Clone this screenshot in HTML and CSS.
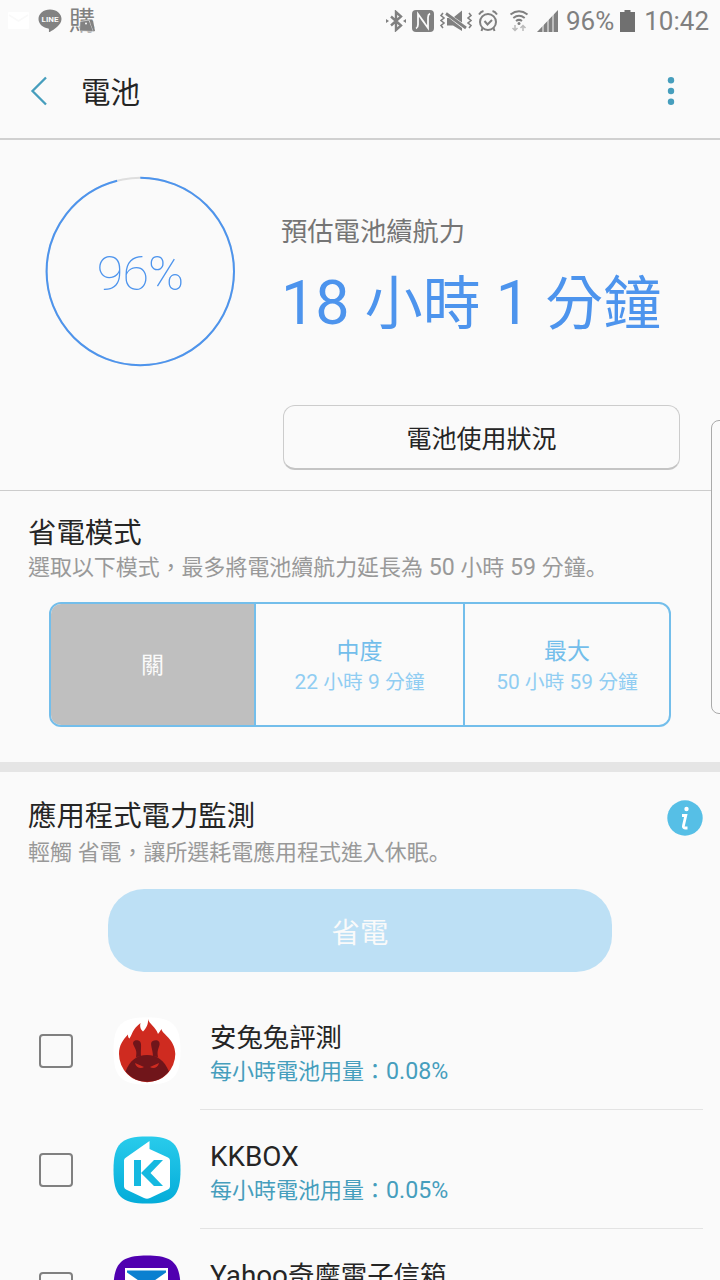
FILE: index.html
```html
<!DOCTYPE html>
<html lang="zh-Hant">
<head>
    <meta charset="UTF-8">
    <meta name="viewport" content="width=device-width, initial-scale=1.0">
    <title>電池</title>
    <link rel="stylesheet" href="styles.css">
</head>
<body>
    <div class="screen">
        <!-- Status bar -->
        <div class="status-bar">
            <svg class="icon-mail" width="22" height="18" viewBox="0 0 22 18"><rect width="21" height="17" rx="1" fill="#fff"/><path d="M1 3l9.500 6 9.500-6" fill="none" stroke="#f9f9f9" stroke-width="1.500"/></svg>
            <svg class="icon-line" width="24" height="24" viewBox="0 0 24 24"><path d="M12 .5C5.500.5.500 4.700.500 10c0 4.700 4 8.600 9.700 9.400 1 .2.800 1.500.700 3.100 0 .7.600.7 1.200.3C16 20.500 23.500 16 23.500 10 23.500 4.700 18.500.500 12 .500z" fill="#828282"/><text x="12" y="13" text-anchor="middle" class="line-label">LINE</text></svg>
            <div class="shop-badge">
                <span>購</span>
                <svg class="bag" width="16" height="13" viewBox="0 0 16 13"><path d="M1 2.500L10 1l4.500 11.500L.500 12z" fill="#828282" stroke="#fafafa" stroke-width=".6"/><path d="M10.500 1.500h3.500l2 10.500-1.500.5z" fill="#828282"/><circle cx="7" cy="4.500" r="1" fill="#fafafa"/></svg>
            </div>
            <div class="status-right">
                <svg class="icon-bt" width="20" height="22" viewBox="0 0 20 22"><path d="M5 6.500l10 9-5 4.500V2l5 4.500-10 9" fill="none" stroke="#808080" stroke-width="2.400"/><path d="M0 9l3 2-3 2zM20 9l-3 2 3 2z" fill="#808080"/></svg>
                <svg class="icon-nfc" width="22" height="22" viewBox="0 0 22 22"><rect width="22" height="22" rx="4" fill="#808080"/><path d="M4 18.500q2-1 2-4V4l6.500 9M18 3.500q-2 1-2 4V18L9.500 9" fill="none" stroke="#fafafa" stroke-width="1.800"/></svg>
                <svg class="icon-mute" width="32" height="22" viewBox="0 0 32 22"><path d="M3 3L1 5.500 4 8 1 10.500 4 13l-3 2.500L3 18M29 3l2 2.500L28 8l3 2.500L28 13l3 2.500-2 2.500" fill="none" stroke="#808080" stroke-width="1.600"/><path d="M14 7L22 .5v12zM7 8v7.500h6L22 21v-3L9 8z" fill="#808080"/><path d="M6 3.500L26 18" stroke="#808080" stroke-width="2.800"/></svg>
                <svg class="icon-alarm" width="20" height="22" viewBox="0 0 20 22"><g fill="none" stroke="#808080" stroke-width="2"><circle cx="10" cy="12" r="8"/><path d="M1 4.500C2 3 3.500 1.500 5.500 1M19 4.500C18 3 16.500 1.500 14.500 1M6.500 11l3 3.500 4.500-4.500M4.500 18L3.500 21M15.500 18l1 3"/></g></svg>
                <svg class="icon-wifi" width="20" height="22" viewBox="0 0 20 22"><path d="M1.500 4.500q8.500-6.500 17 0M4.300 8q5.700-4.500 11.400 0M7 11q3-2.300 6 0" fill="none" stroke="#808080" stroke-width="2"/><circle cx="10" cy="13.500" r="1.500" fill="#808080"/><path d="M6 15v5M3.500 18L6 20.500 8.500 18M14 21v-5M11.500 18l2.500-2.500 2.500 2.500" fill="none" stroke="#bbb" stroke-width="1.500"/></svg>
                <svg class="icon-signal" width="21" height="22" viewBox="0 0 21 22"><path d="M0 22L21 0v22z" fill="#808080"/><path d="M6 8v14M11 4v18M16 0v22" stroke="#fafafa" stroke-width="1"/></svg>
                <span class="percent">96%</span>
                <svg class="icon-battery" width="15" height="22" viewBox="0 0 15 22"><path d="M0 2h4.500V0h6v2H15v20H0z" fill="#707070"/></svg>
                <span class="clock">10:42</span>
            </div>
        </div>

        <!-- Title bar -->
        <header class="title-bar">
            <svg class="back" width="18" height="30" viewBox="0 0 18 30"><path d="M16 1.500L2.500 15 16 28.500" fill="none" stroke="#469ebd" stroke-width="2.300"/></svg>
            <h1>電池</h1>
            <svg class="more" width="8" height="30" viewBox="0 0 8 30"><g fill="#469ebd"><circle cx="4" cy="4.300" r="3.200"/><circle cx="4" cy="15" r="3.200"/><circle cx="4" cy="25.700" r="3.200"/></g></svg>
        </header>

        <!-- Remaining battery -->
        <section class="summary">
            <div class="gauge">
                <svg width="192" height="192" viewBox="0 0 192 192"><circle cx="96.300" cy="96.500" r="93.700" fill="none" stroke="#dedede" stroke-width="2"/><circle cx="96.300" cy="96.500" r="93.700" fill="none" stroke="#4d94ed" stroke-width="2" pathLength="100" stroke-dasharray="96 4" transform="rotate(-90 96.300 96.500)"/></svg>
                <span class="gauge-value">96%</span>
            </div>
            <div class="estimate">
                <div class="estimate-label">預估電池續航力</div>
                <div class="estimate-time"><span class="num">18 </span>小時<span class="num"> 1 </span>分鐘</div>
                <button class="usage-button">電池使用狀況</button>
            </div>
        </section>

        <!-- Power saving mode -->
        <section class="power-mode">
            <h2>省電模式</h2>
            <p class="desc">選取以下模式<span class="comma" lang="ja">，</span>最多將電池續航力延長為<span class="num"> 50 </span>小時<span class="num"> 59 </span>分鐘<span lang="ja">。</span></p>
            <div class="modes">
                <div class="mode selected"><div class="mode-name">關</div></div>
                <div class="mode">
                    <div class="mode-name">中度</div>
                    <div class="mode-time"><span class="num">22 </span>小時<span class="num"> 9 </span>分鐘</div>
                </div>
                <div class="mode">
                    <div class="mode-name">最大</div>
                    <div class="mode-time"><span class="num">50 </span>小時<span class="num"> 59 </span>分鐘</div>
                </div>
            </div>
        </section>

        <!-- App power monitor -->
        <section class="monitor">
            <div class="monitor-head">
                <div>
                    <h2>應用程式電力監測</h2>
                    <p class="desc">輕觸<span class="num"> </span>省電<span class="comma" lang="ja">，</span>讓所選耗電應用程式進入休眠<span lang="ja">。</span></p>
                </div>
                <svg class="info" width="36" height="36" viewBox="0 0 36 36"><circle cx="18" cy="18" r="17.700" fill="#56bfe6"/><circle cx="19.500" cy="9" r="2.200" fill="#fff"/><path d="M15 15.500h3.800L16.500 25.500q-.6 2.500 1.500 2.500h2.500" fill="none" stroke="#fff" stroke-width="2.800"/></svg>
            </div>
            <button class="save-button">省電</button>
            <div class="app-list">
                <div class="app">
                    <span class="check"></span>
                    <svg class="app-icon" width="68" height="68" viewBox="0 0 68 68">
                        <path d="M34 .5C60 .5 67.500 8 67.500 34S60 67.500 34 67.500.500 60 .500 34 8 .500 34 .500z" fill="#fff"/>
                        <path d="M35 2c1 5 8 8 10 15 1-1 2-3 3.500-5C49 17 62 22 62.300 37A28 28 0 0 1 6 37c0-9 4-14 9-19.500-.2 2 .5 3.500 1.500 4C20 16 19 13 27.500 6c-1 4 .5 7 2.500 8.500C33.500 11 35.500 7 35 2z" fill="#cf2b20"/>
                        <path d="M12.500 54.500C17 43 24 38 34 38s17 5 22 16.500A28 28 0 0 1 12.500 54.500z" fill="#70151a"/>
                        <path d="M23 40c1-6 0-7-2.500-12-2-5 4-6 6.500-3.500 2 2 .5 8 1 15zM45 40c-1-6 0-7 1.500-12 1-5-4-6-7.500-3.500-2.500 2 1 8 1 15z" fill="#70151a"/>
                        <path d="M22 46l9 4c-3 2-8 1-9-4zM46 46l-9 4c3 2 8 1 9-4z" fill="#cf2b20"/>
                    </svg>
                    <div class="app-text">
                        <div class="app-name">安兔兔評測</div>
                        <div class="app-usage">每小時電池用量：<span class="num">0.08%</span></div>
                    </div>
                </div>
                <div class="app">
                    <span class="check"></span>
                    <svg class="app-icon" width="68" height="68" viewBox="0 0 68 68">
                        <defs><linearGradient id="kk" x1="0" y1="0" x2="0" y2="1"><stop offset="0" stop-color="#29cbeb"/><stop offset="1" stop-color="#04acd9"/></linearGradient></defs>
                        <path d="M34 .5C60 .5 67.500 8 67.500 34S60 67.500 34 67.500.500 60 .500 34 8 .500 34 .500z" fill="url(#kk)"/>
                        <path d="M36.500 5v8L55 21.500q2 1 2 3v26q0 2-2 3L37 62q-3 1.500-6 0L13 53.500q-2-1-2-3v-26q0-2 2-3z" fill="#fff"/>
                        <path d="M21 24h7v26h-7zM41 24h9L37.500 37 50 50h-9L28 37z" fill="#16b9e0"/>
                    </svg>
                    <div class="app-text">
                        <div class="app-name"><span class="num">KKBOX</span></div>
                        <div class="app-usage">每小時電池用量：<span class="num">0.05%</span></div>
                    </div>
                </div>
                <div class="app">
                    <span class="check"></span>
                    <svg class="app-icon" width="68" height="68" viewBox="0 0 68 68">
                        <path d="M34 .5C60 .5 67.500 8 67.500 34S60 67.500 34 67.500.500 60 .500 34 8 .500 34 .500z" fill="#5000b0"/>
                        <path d="M12 13h43v35H12z" fill="#fff"/>
                        <path d="M14 15.500h39v2L33.500 31 14 17.500z" fill="#0a80d0"/>
                    </svg>
                    <div class="app-text">
                        <div class="app-name"><span class="num">Yahoo</span>奇摩電子信箱</div>
                    </div>
                </div>
            </div>
        </section>

        <!-- Edge panel handle -->
        <div class="edge-handle"></div>
    </div>
</body>
</html>
```
FILE: styles.css
```css
* {
    box-sizing: border-box;
}
body {
    margin: 0;
    background: #fafafa;
    color: #252525;
    font-family: Roboto, "Noto Sans CJK TC", sans-serif;
}
h1, h2, p {
    margin: 0;
    font-weight: 400;
}
svg {
    display: block;
    flex-shrink: 0;
}
button {
    display: block;
    padding: 0;
    font-family: inherit;
}
.screen {
    position: relative;
    width: 720px;
    height: 1280px;
    overflow: hidden;
}
/* latin runs are slightly larger than the CJK text around them */
.num {
    font-size: 1.055em;
    white-space: pre;
}
/* comma sits on the baseline, in a full cell */
.comma {
    display: inline-block;
    width: 1em;
}

/* Status bar */
.status-bar {
    display: flex;
    align-items: center;
    height: 42px;
    padding: 0 11px 0 8px;
    color: #808080;
    font-size: 26px;
}
.icon-line {
    margin-left: 8px;
}
.line-label {
    font: bold 8px Roboto, sans-serif;
    fill: #fafafa;
}
.shop-badge {
    position: relative;
    margin-left: 7px;
    line-height: 42px;
}
.bag {
    position: absolute;
    right: 0;
    bottom: 10px;
}
.status-right {
    display: flex;
    align-items: center;
    margin-left: auto;
    line-height: 42px;
}
.icon-nfc,
.icon-mute,
.icon-alarm {
    margin-left: 6px;
}
.icon-wifi {
    margin-left: 11px;
}
.icon-signal {
    margin-left: 8px;
}
.percent {
    margin-left: 8px;
}
.icon-battery {
    margin-left: 6px;
}
.clock {
    margin-left: 9px;
}

/* Title bar */
.title-bar {
    display: flex;
    align-items: center;
    height: 98px;
    padding: 2px 45px 0 30px;
    border-bottom: 2px solid #d0d0d0;
}
.title-bar h1 {
    margin-left: 33px;
    padding-top: 4px;
    font-size: 29.5px;
    line-height: 40px;
}
.more {
    margin-left: auto;
}

/* Remaining battery */
.summary {
    display: flex;
    height: 351px;
    padding: 35px 39px 0 44px;
    border-bottom: 1px solid #ccc;
}
.gauge {
    display: grid;
    width: 192px;
    height: 192px;
    place-items: center;
}
.gauge svg, .gauge-value {
    grid-area: 1 / 1;
}
.gauge-value {
    padding-top: 5px;
    color: #4d94ed;
    font-size: 48.5px;
    font-weight: 100;
    letter-spacing: -1px;
    line-height: 60px;
}
.estimate {
    flex: 1;
    margin-left: 45px;
    padding-top: 38px;
}
.estimate-label {
    color: #757575;
    font-size: 26.3px;
    line-height: 38px;
}
.estimate-time {
    margin-top: 14px;
    color: #4d94ed;
    font-size: 57.9px;
    line-height: 76px;
    white-space: nowrap;
}
.usage-button {
    width: 397px;
    height: 65px;
    margin: 63px 0 0 2px;
    padding-bottom: 1px;
    border: 1px solid #ccc;
    border-bottom: 2px solid #c4c4c4;
    border-radius: 12px;
    background: #fafafa;
    color: #252525;
    font-size: 25px;
}

/* Power saving mode */
.power-mode {
    height: 281px;
    padding: 23px 28px 0;
    border-bottom: 10px solid #e5e5e5;
}
h2 {
    font-size: 28.4px;
    line-height: 40px;
}
.desc {
    margin-top: -2px;
    color: #999;
    font-size: 21.95px;
    line-height: 32px;
    white-space: nowrap;
}
.modes {
    display: grid;
    grid-template-columns: 205px 209px 1fr;
    width: 622px;
    height: 125px;
    margin: 18px 0 0 21px;
    border: 2px solid #73beeb;
    border-radius: 12px;
    overflow: hidden;
}
.mode {
    display: flex;
    flex-direction: column;
    align-items: center;
    justify-content: center;
    padding-top: 3px;
    border-right: 2px solid #73beeb;
}
.mode:last-child {
    border-right: 0;
}
.mode.selected {
    background: #bfbfbf;
    color: #fafafa;
}
.mode-name {
    font-size: 23px;
    line-height: 32px;
}
.mode:not(.selected) .mode-name {
    padding-top: 2px;
    color: #73beeb;
    line-height: 30px;
}
.mode-time {
    color: #90cdf2;
    font-size: 19.8px;
    line-height: 30px;
}

/* App power monitor */
.monitor-head {
    display: flex;
    justify-content: space-between;
    padding: 25px 17px 0 28px;
}
.monitor-head .desc {
    margin-top: 0;
}
.info {
    margin-top: 3px;
}
.save-button {
    width: 504px;
    height: 83px;
    margin: 20px 0 0 108px;
    border: 0;
    border-radius: 36px;
    background: #bde0f5;
    color: #fafafa;
    font-size: 28.4px;
}
.app-list {
    margin-top: 19px;
}
.app {
    display: flex;
    align-items: center;
    height: 119px;
    padding: 0 17px 0 39px;
}
.check {
    width: 34px;
    height: 34px;
    border: 2px solid #808080;
    border-radius: 4px;
}
.app-icon {
    margin-left: 40px;
}
.app-text {
    flex: 1;
    height: 119px;
    margin-left: 19px;
    padding: 28px 0 0 10px;
    border-bottom: 1px solid #e3e3e3;
}
.app-name {
    font-size: 26.4px;
    line-height: 38px;
}
.app-usage {
    margin-top: -2px;
    color: #469ebd;
    font-size: 22px;
    line-height: 32px;
}

.edge-handle {
    position: absolute;
    top: 420px;
    right: -10px;
    width: 19px;
    height: 294px;
    border: 1px solid #aaa;
    border-radius: 8px;
    background: #fafafa;
}
```
